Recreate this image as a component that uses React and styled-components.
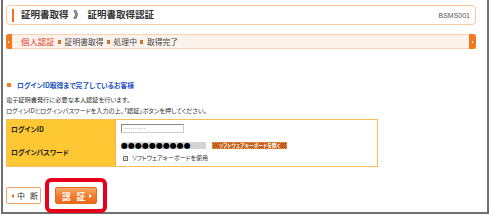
import React from "react";
import styled, { createGlobalStyle } from "styled-components";

const Global = createGlobalStyle`
  html, body { margin: 0; padding: 0; background: #fff; }
  body { font-family: "Noto Sans CJK JP", "Noto Sans", sans-serif; }
  * { box-sizing: border-box; }
`;

const Frame = styled.div`
  width: 488px;
  height: 214px;
  margin-left: 1px;
  border: 2px solid #707070;
  border-top: none;
  padding: 5px 11px 0 3px;
`;

const Header = styled.div`
  display: flex;
  align-items: center;
  height: 20px;
  border: 1px solid #f9c9a0;
  border-radius: 4px;
  padding: 0 5px 0 5px;
`;

const HeaderBar = styled.span`
  width: 2px;
  height: 13px;
  background: #f07020;
`;

const Title = styled.h1`
  margin: 0 0 0 7px;
  flex: 1;
  font-size: 9.5px;
  font-weight: bold;
  color: #333;
  line-height: 1;
  white-space: pre;
`;

const ScreenCode = styled.span`
  font-family: "Liberation Sans", Arial, sans-serif;
  font-size: 7px;
  color: #555;
`;

const StepBar = styled.div`
  margin-top: 9px;
  height: 15px;
  display: flex;
  align-items: stretch;
  background: #fcf2ec;
  border-top: 1px solid #f8d2b4;
  border-bottom: 1px solid #f8d2b4;
`;

const StepTab = styled.span`
  position: relative;
  width: ${(p) => (p.$end ? 7 : 6)}px;
  margin: -1px 0;
  background: #f07a1e;
  border-radius: ${(p) => (p.$end ? "0 3px 3px 0" : "3px 0 0 3px")};
  &::after {
    content: "";
    position: absolute;
    left: ${(p) => (p.$end ? 3 : 2)}px;
    top: 7px;
    width: 1px;
    height: 2px;
    background: #fff;
  }
`;

const Steps = styled.div`
  flex: 1;
  display: flex;
  align-items: center;
  gap: 3px;
  padding-left: 9px;
`;

const Step = styled.span`
  font-size: ${(p) => (p.$active ? 8.3 : 7.8)}px;
  line-height: 1;
  color: ${(p) => (p.$active ? "#e2402a" : "#444")};
  letter-spacing: ${(p) => (p.$active ? "0.1px" : "0")};
`;

const StepSep = styled.span`
  width: 3px;
  height: 4px;
  margin-right: 1px;
  background: #d98a4a;
  border: 1px solid #c87030;
`;

const SectionHead = styled.h2`
  margin: 31px 0 0 1px;
  display: flex;
  align-items: center;
  height: 10px;
  font-size: 6.8px;
  font-weight: bold;
  color: #2150c0;
  font-feature-settings: "palt";
  &::before {
    content: "";
    width: 4px;
    height: 4px;
    background: #f08020;
    margin-right: 6px;
  }
`;

const Lead = styled.p`
  margin: 4px 0 0 0;
  font-size: 6.2px;
  line-height: 11px;
  color: #333;
  font-feature-settings: "palt";
`;

const FormTable = styled.div`
  margin-top: 3px;
  width: 372px;
  border: 1px solid #fbbd5c;
`;

const Row = styled.div`
  display: grid;
  grid-template-columns: 109px 1fr;
  height: ${(p) => p.$h}px;
  & + & > * {
    border-top: 1px solid #dcdcdc;
  }
  & + & > *:first-child {
    border-top-color: #f5b040;
  }
`;

const Label = styled.div`
  display: flex;
  align-items: center;
  padding-left: 4px;
  background: #fdc833;
  border-right: 1px solid #f7b24a;
  font-size: 6.8px;
  font-weight: bold;
  color: #222;
  font-feature-settings: "palt";
`;

const Value = styled.div`
  display: flex;
  flex-direction: column;
  justify-content: center;
  gap: 6px;
  padding-left: 5px;
`;

const TextInput = styled.div`
  width: 63px;
  height: 9px;
  border: 1px solid #8a8a8a;
  border-right-color: #ccc;
  border-bottom-color: #ccc;
  display: flex;
  align-items: center;
  padding-left: 2px;
  font-family: "DejaVu Sans", sans-serif;
  font-size: 5px;
  letter-spacing: 0.6px;
  color: #000;
  line-height: 1;
`;

const PwLine = styled.div`
  display: flex;
  align-items: center;
  gap: 6px;
`;

const PwField = styled.div`
  width: 85px;
  height: 7px;
  background: #d4d4d4;
  display: flex;
  align-items: center;
  font-family: "DejaVu Sans", sans-serif;
  font-size: 8px;
  letter-spacing: 0px;
  color: #000;
  line-height: 1;
  overflow: hidden;
`;

const SoftKeyButton = styled.button`
  height: 7px;
  width: 75px;
  padding: 0;
  margin: 0;
  border: 1px dotted #eaa060;
  background: #c4601c;
  color: #fff;
  font-family: inherit;
  font-size: 4.8px;
  font-weight: bold;
  line-height: 1;
  display: flex;
  align-items: center;
  justify-content: center;
  white-space: nowrap;
  font-feature-settings: "palt";
`;

const CheckLine = styled.label`
  display: flex;
  align-items: center;
  gap: 4px;
  padding-left: 2px;
  font-size: 6px;
  color: #333;
  line-height: 1;
  font-feature-settings: "palt";
`;

const CheckBox = styled.span`
  width: 5px;
  height: 5px;
  border: 1px solid #777;
  background: #fff;
  display: flex;
  align-items: center;
  justify-content: center;
  svg { display: block; }
`;

const Buttons = styled.div`
  margin-top: 20px;
  display: flex;
  gap: 14px;
`;

const CancelButton = styled.button`
  width: 35px;
  height: 17px;
  margin: 0;
  padding: 0 0 0 4px;
  border: 1px solid #f2a468;
  border-radius: 2px;
  background: #fff;
  display: flex;
  align-items: center;
  gap: 3px;
  font-family: inherit;
  font-size: 8px;
  color: #333;
  white-space: nowrap;
  letter-spacing: 5px;
  &::before {
    content: "";
    border-right: 3px solid #f07020;
    border-top: 2px solid transparent;
    border-bottom: 2px solid transparent;
  }
`;

const SubmitWrap = styled.div`
  position: relative;
`;

const SubmitButton = styled.button`
  width: 42px;
  height: 17px;
  margin: 0;
  padding: 0 0 0 6px;
  border: 1px solid #e86a20;
  border-radius: 2px;
  background: linear-gradient(#f7a868, #f08030 50%, #ec6818);
  display: flex;
  align-items: center;
  font-family: inherit;
  font-size: 8.6px;
  font-weight: bold;
  color: #fff;
  white-space: nowrap;
  letter-spacing: 6px;
  &::after {
    content: "";
    border-left: 3px solid #fff;
    border-top: 2.5px solid transparent;
    border-bottom: 2.5px solid transparent;
    margin-left: -2px;
  }
`;

const Highlight = styled.span`
  position: absolute;
  left: -10px;
  top: -9px;
  right: -10px;
  bottom: -9px;
  border: 4px solid #e8001a;
  border-radius: 6px;
  pointer-events: none;
`;

export default function App() {
  return (
    <>
      <Global />
      <Frame>
        <Header>
          <HeaderBar />
          <Title>{"証明書取得\u2002》\u2002証明書取得認証"}</Title>
          <ScreenCode>BSMS001</ScreenCode>
        </Header>
        <StepBar>
          <StepTab />
          <Steps>
            <Step $active>個人認証</Step>
            <StepSep />
            <Step>証明書取得</Step>
            <StepSep />
            <Step>処理中</Step>
            <StepSep />
            <Step>取得完了</Step>
          </Steps>
          <StepTab $end />
        </StepBar>
        <SectionHead>ログインID取得まで完了しているお客様</SectionHead>
        <Lead>
          電子証明書発行に必要な本人認証を行います。
          <br />
          ログインIDとログインパスワードを入力の上、「認証」ボタンを押してください。
        </Lead>
        <FormTable>
          <Row $h={17}>
            <Label>ログインID</Label>
            <Value>
              <TextInput>··········</TextInput>
            </Value>
          </Row>
          <Row $h={29}>
            <Label>ログインパスワード</Label>
            <Value>
              <PwLine>
                <PwField>●●●●●●●●●●</PwField>
                <SoftKeyButton>ソフトウェアキーボードを開く</SoftKeyButton>
              </PwLine>
              <CheckLine>
                <CheckBox>
                  <svg width="5" height="5" viewBox="0 0 5 5">
                    <path d="M0.6 2.4 L2 3.8 L4.4 0.8" fill="none" stroke="#222" strokeWidth="0.9" />
                  </svg>
                </CheckBox>
                ソフトウェアキーボードを使用
              </CheckLine>
            </Value>
          </Row>
        </FormTable>
        <Buttons>
          <CancelButton>中断</CancelButton>
          <SubmitWrap>
            <SubmitButton>認証</SubmitButton>
            <Highlight />
          </SubmitWrap>
        </Buttons>
      </Frame>
    </>
  );
}
